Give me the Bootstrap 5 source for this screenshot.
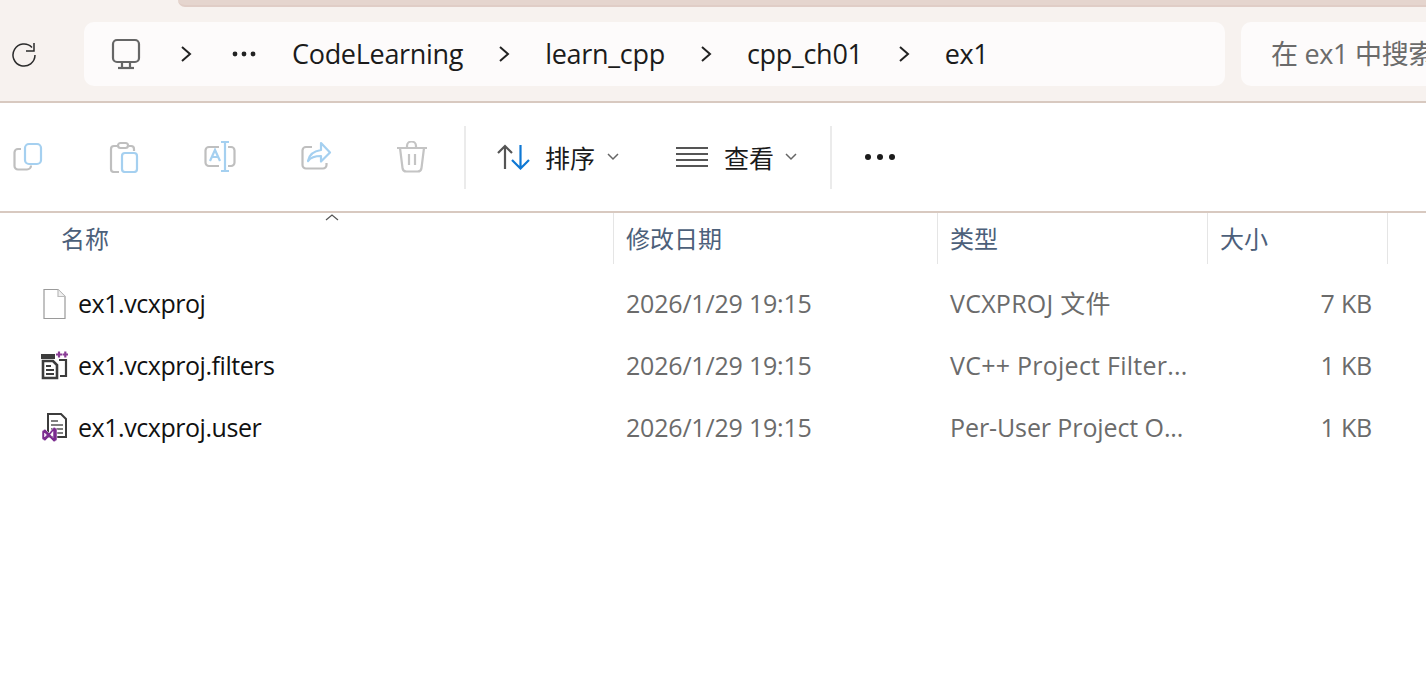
<!DOCTYPE html>
<html lang="zh-CN">
<head>
  <meta charset="UTF-8">
  <title>ex1</title>
  <link href="https://cdn.jsdelivr.net/npm/bootstrap@5.3.0/dist/css/bootstrap.min.css" rel="stylesheet">
  <style>
    html, body { height: 100%; overflow: hidden; }
    body {
      background: #fff;
      font-family: "Open Sans", "Noto Sans CJK SC", sans-serif;
      font-size: 25px;
      color: #1b1b1b;
    }
    .tab-strip { height: 7px; background: #f7f2ef; padding-left: 178px; }
    .tab-edge { height: 7px; background: #e5d5ce; border-bottom: 2px solid #e0cdc6; border-bottom-left-radius: 8px; }
    .addr-bar { height: 96px; background: #f7f2ef; border-bottom: 2px solid #d8c9c0; padding: 15px 0 13px 0; }
    .refresh-cell { width: 84px; padding-left: 12px; }
    .crumbs { width: 1141px; height: 64px; background: #fdfbfb; border-radius: 10px; padding-left: 26px; }
    .crumb-text { font-size: 27px; letter-spacing: -.3px; white-space: nowrap; }
    .crumb-sep { margin: 0 35px; }
    .search-box { height: 64px; flex: 1; margin-left: 16px; background: #fdfbfb; border-radius: 10px 0 0 10px; padding-left: 30px; color: #6b6b6b; font-size: 27px; letter-spacing: -.3px; white-space: nowrap; overflow: hidden; }
    .cmd-bar { height: 110px; border-bottom: 2px solid #d8c9c0; padding-left: 12px; }
    .cmd-gap { gap: 64px; }
    .cmd-sep { width: 2px; height: 63px; background: #ebebeb; }
    .cmd-label { font-size: 25px; line-height: 1; margin-top: 2px; }
    .list-head, .file-row { display: grid; grid-template-columns: 614px 324px 270px 180px; }
    .list-head { height: 51px; position: relative; color: #4c607a; font-size: 24px; }
    .list-head > div { border-right: 1px solid #e5e5e5; padding: 0 0 0 12px; display: flex; align-items: center; }
    .list-head > div:first-of-type { padding-left: 61px; }
    .sort-mark { position: absolute; left: 325px; top: 0; }
    .file-list { padding-top: 9px; }
    .file-row { height: 62px; align-items: center; color: #6b6b6b; font-size: 25px; letter-spacing: -.2px; white-space: nowrap; }
    .file-row > div { padding-left: 12px; overflow: hidden; }
    .file-row .name-cell { padding-left: 40px; color: #111; letter-spacing: -.45px; display: flex; align-items: center; gap: 10px; overflow: visible; }
    .file-row .type-cell { letter-spacing: .25px; }
    .file-row .type-tight { letter-spacing: -.1px; }
    .file-row .size-cell { padding: 0 16px 0 0; text-align: right; }
  </style>
</head>
<body>
  <div class="tab-strip"><div class="tab-edge"></div></div>

  <div class="addr-bar d-flex">
    <div class="refresh-cell d-flex align-items-center">
      <svg width="26" height="26" viewBox="0 0 26 26" fill="none" stroke="#2b2b2b" stroke-width="1.5"><path d="M20 5.500A11 11 0 1 0 23 13"/><path d="M22 1v8h-8"/></svg>
    </div>
    <div class="crumbs d-flex align-items-center">
      <svg width="32" height="32" viewBox="0 0 32 32" fill="none" stroke="#666" stroke-width="2.2"><rect x="3" y="2" width="26" height="22" rx="4"/><path d="M12 25v4M20 25v4"/><path d="M8 30h16"/></svg>
      <svg style="margin-left:38px" width="12" height="18" viewBox="0 0 12 18" fill="none" stroke="#222" stroke-width="2"><path d="M2 2l8 7-8 7"/></svg>
      <svg style="margin-left:40px" width="24" height="6" viewBox="0 0 24 6" fill="#222"><circle cx="3" cy="3" r="2.4"/><circle cx="12" cy="3" r="2.4"/><circle cx="21" cy="3" r="2.4"/></svg>
      <span class="crumb-text" style="margin-left:36px">CodeLearning</span>
      <svg class="crumb-sep" width="12" height="18" viewBox="0 0 12 18" fill="none" stroke="#222" stroke-width="2"><path d="M2 2l8 7-8 7"/></svg>
      <span class="crumb-text">learn_cpp</span>
      <svg class="crumb-sep" width="12" height="18" viewBox="0 0 12 18" fill="none" stroke="#222" stroke-width="2"><path d="M2 2l8 7-8 7"/></svg>
      <span class="crumb-text">cpp_ch01</span>
      <svg class="crumb-sep" width="12" height="18" viewBox="0 0 12 18" fill="none" stroke="#222" stroke-width="2"><path d="M2 2l8 7-8 7"/></svg>
      <span class="crumb-text">ex1</span>
    </div>
    <div class="search-box d-flex align-items-center">在 ex1 中搜索</div>
  </div>

  <div class="cmd-bar d-flex align-items-center">
    <div class="d-flex align-items-center cmd-gap">
      <!-- copy -->
      <svg width="32" height="32" viewBox="0 0 32 32" fill="none" stroke-width="2.2"><path d="M9 8H6a3.500 3.500 0 0 0-3.500 3.500V25A3.500 3.500 0 0 0 6 28.500h9a4 4 0 0 0 4-4" stroke="#bfbfbf"/><rect x="13" y="3" width="16" height="20" rx="4" stroke="#a5d0f0"/></svg>
      <!-- paste -->
      <svg width="32" height="32" viewBox="0 0 32 32" fill="none" stroke-width="2.2"><path d="M9 5H6a3 3 0 0 0-3 3v20a3 3 0 0 0 3 3h5M21 5h2a3 3 0 0 1 3 3v2" stroke="#bfbfbf"/><rect x="10" y="2" width="10" height="5" rx="2.500" stroke="#bfbfbf"/><rect x="14" y="12" width="15" height="19" rx="3" stroke="#a5d0f0"/></svg>
      <!-- rename -->
      <svg width="32" height="32" viewBox="0 0 32 32" fill="none" stroke-width="2.200"><path d="M15 6H5a3.500 3.500 0 0 0-3.500 3.500v12A3.500 3.500 0 0 0 5 25h10M24 6h3a3.500 3.500 0 0 1 3.500 3.500v12A3.500 3.500 0 0 1 27 25h-3" stroke="#bfbfbf"/><path d="M6 20l5-11 5 11M8 16h6M21 1v29M17 1h8M17 30h8" stroke="#a5d0f0"/></svg>
      <!-- share -->
      <svg width="32" height="32" viewBox="0 0 32 32" fill="none" stroke-width="2.200"><path d="M12 6H6a3.500 3.500 0 0 0-3.500 3.500V24A3.500 3.500 0 0 0 6 27.500h17a3.500 3.500 0 0 0 3.500-3.500v-2" stroke="#bfbfbf"/><path d="M21 2l9 9.500-9 9V15c-6 0-10 1-13 5 1-6 6-10 13-11z" stroke="#a5d0f0" stroke-linejoin="round"/></svg>
      <!-- delete -->
      <svg width="32" height="32" viewBox="0 0 32 32" fill="none" stroke="#c4c4c4" stroke-width="2.200"><path d="M1 7h30M11 7V5a4.500 4.500 0 0 1 9 0v2M4 7l2.500 20a4 4 0 0 0 4 3.500h11a4 4 0 0 0 4-3.500L28 7M13 13v11M19 13v11"/></svg>
    </div>
    <div class="cmd-sep" style="margin-left:36px"></div>
    <svg style="margin-left:31px" width="33" height="26" viewBox="0 0 33 26" fill="none" stroke-width="2.200"><path d="M8 25V2M1 9l7-7 7 7" stroke="#555"/><path d="M23.500 1v23M15 16l8.500 8.500L32 16" stroke="#0f78d4"/></svg>
    <span class="cmd-label" style="margin-left:15px">排序</span>
    <svg style="margin-left:12px" width="12" height="8" viewBox="0 0 12 8" fill="none" stroke="#666" stroke-width="1.500"><path d="M1 1l5 5 5-5"/></svg>
    <svg style="margin-left:57px" width="32" height="22" viewBox="0 0 32 22" fill="none" stroke="#555" stroke-width="2"><path d="M0 2h32M0 8h32M0 14h32M0 20h32"/></svg>
    <span class="cmd-label ms-3">查看</span>
    <svg style="margin-left:11px" width="12" height="8" viewBox="0 0 12 8" fill="none" stroke="#666" stroke-width="1.500"><path d="M1 1l5 5 5-5"/></svg>
    <div class="cmd-sep" style="margin-left:33px"></div>
    <svg style="margin-left:31px" width="34" height="8" viewBox="0 0 34 8" fill="#1b1b1b"><circle cx="5" cy="4" r="3"/><circle cx="17" cy="4" r="3"/><circle cx="29" cy="4" r="3"/></svg>
  </div>

  <div class="list-head">
    <svg class="sort-mark" width="14" height="8" viewBox="0 0 14 8" fill="none" stroke="#555" stroke-width="1.200"><path d="M1 7l6-5 6 5"/></svg>
    <div>名称</div>
    <div>修改日期</div>
    <div>类型</div>
    <div>大小</div>
  </div>

  <div class="file-list">
    <div class="file-row">
      <div class="name-cell">
        <svg width="28" height="32" viewBox="0 0 28 32" fill="none"><path d="M4 1.500h14l7 7V30.500H4z" fill="#fff" stroke="#9a9a9a" stroke-width="1.200"/><path d="M18 1.500v7h7" fill="#f0f0f0" stroke="#bbb" stroke-width="1.200"/></svg>
        <span>ex1.vcxproj</span>
      </div>
      <div>2026/1/29 19:15</div>
      <div class="type-cell">VCXPROJ 文件</div>
      <div class="size-cell">7 KB</div>
    </div>
    <div class="file-row">
      <div class="name-cell">
        <svg width="28" height="30" viewBox="0 0 28 30" fill="none"><path d="M1 3h14v5H1z" fill="#3c3c3c"/><path d="M3 10h10l4 4v13H3z" fill="#fff" stroke="#3c3c3c" stroke-width="2.600"/><path d="M6 15h5M6 19h8M6 23h8" stroke="#3c3c3c" stroke-width="2"/><path d="M19 9h7v16h-6" stroke="#3c3c3c" stroke-width="2.200"/><path d="M16 3.500h6M19 .5v6M22.500 3.500h5.500M25.300 .5v6" stroke="#8a3d96" stroke-width="2.200"/></svg>
        <span>ex1.vcxproj.filters</span>
      </div>
      <div>2026/1/29 19:15</div>
      <div class="type-cell">VC++ Project Filter...</div>
      <div class="size-cell">1 KB</div>
    </div>
    <div class="file-row">
      <div class="name-cell">
        <svg width="28" height="30" viewBox="0 0 28 30" fill="none"><path d="M8 1h13l5 5v18H8z" fill="#fff" stroke="#3c3c3c" stroke-width="2"/><path d="M11 8h7M11 12h12M11 16h12M17 20h6" stroke="#555" stroke-width="1.600"/><path d="M2 18l3-2 4 4 5-6 3 2v11l-3 2-5-5-4 4-3-2z M13 18.500v6l-2.500-3z M4.500 20v4l2-2z" fill="#7b2c8f" fill-rule="evenodd" stroke="#fff" stroke-width=".5"/></svg>
        <span>ex1.vcxproj.user</span>
      </div>
      <div>2026/1/29 19:15</div>
      <div class="type-cell type-tight">Per-User Project O...</div>
      <div class="size-cell">1 KB</div>
    </div>
  </div>

  <script src="https://cdn.jsdelivr.net/npm/bootstrap@5.3.0/dist/js/bootstrap.bundle.min.js"></script>
</body>
</html>
